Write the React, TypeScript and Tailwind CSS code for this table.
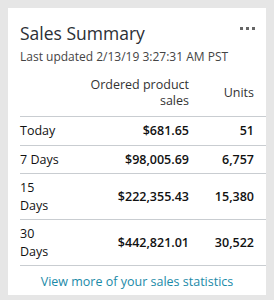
const rows = [
	{ label: "Today", sales: "$681.65", units: "51" },
	{ label: "7 Days", sales: "$98,005.69", units: "6,757" },
	{ label: "15 Days", sales: "$222,355.43", units: "15,380" },
	{ label: "30 Days", sales: "$442,821.01", units: "30,522" },
];

const SalesSummaryCard = () => {
	return (
		<div className="min-h-[300px] bg-[#e6e6e6] p-2 font-['Open_Sans',sans-serif]">
			<div className="flex h-[287px] flex-col bg-white pl-3">
				{/* Header */}
				<div className="flex items-start justify-between pr-3 pt-[11px]">
					<h2 className="text-[17.5px] leading-[28px] text-[#2b2f35]">
						Sales Summary
					</h2>
					<div className="mr-[-1px] mt-[8px] flex gap-[3px]">
						<span className="h-[3px] w-[3px] bg-[#666]" />
						<span className="h-[3px] w-[3px] bg-[#666]" />
						<span className="h-[3px] w-[3px] bg-[#666]" />
					</div>
				</div>
				<p className="mt-[2px] text-[12px] leading-[16px] text-[#444]">
					Last updated 2/13/19 3:27:31 AM PST
				</p>

				{/* Table */}
				<table className="mt-[12px] w-full border-collapse text-[12.5px] leading-[17.5px] text-[#111]">
					<thead>
						<tr className="border-b border-[#c9cdd1] text-[#333]">
							<th className="w-[40px] pb-[7px]" />
							<th className="pb-[7px] text-right font-normal leading-[16px]">
								<span className="inline-block w-[100px]">Ordered product sales</span>
							</th>
							<th className="w-[77px] pb-[7px] pr-3 text-right align-middle font-normal">
								Units
							</th>
						</tr>
					</thead>
					<tbody>
						{rows.map((row) => (
							<tr key={row.label} className="border-b border-[#c9cdd1]">
								<td className="w-[40px] py-[5px] align-middle">{row.label}</td>
								<td className="py-[5px] text-right align-middle font-semibold">
									{row.sales}
								</td>
								<td className="py-[5px] pr-3 text-right align-middle font-semibold">
									{row.units}
								</td>
							</tr>
						))}
					</tbody>
				</table>

				<div className="mt-[6px] pr-3 text-center leading-[17px]">
					<a href="#" className="text-[12.5px] text-[#1b8aa8]">
						View more of your sales statistics
					</a>
				</div>
			</div>
		</div>
	);
};

export default SalesSummaryCard;
